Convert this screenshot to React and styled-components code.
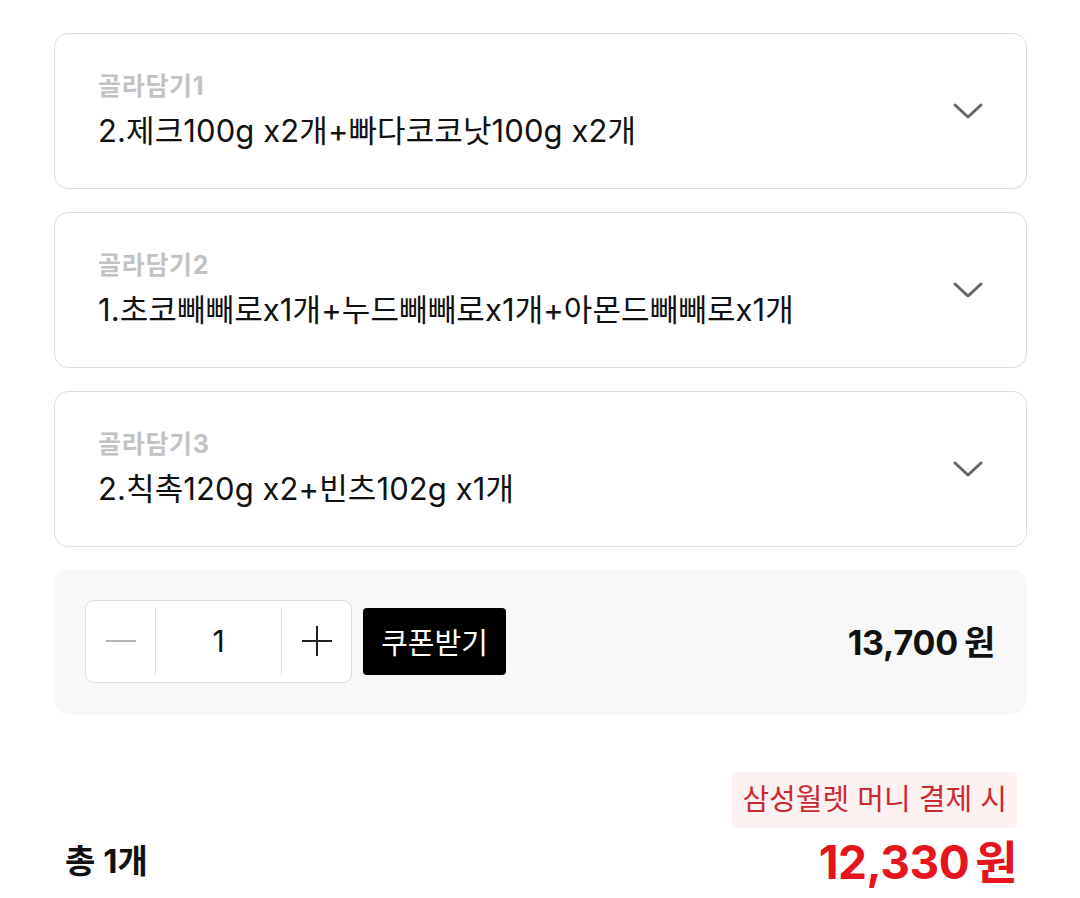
import React from "react";
import styled, { createGlobalStyle } from "styled-components";

const Global = createGlobalStyle`
  html, body { margin: 0; padding: 0; background: #fff; }
  body { font-family: Inter, "Noto Sans CJK KR", sans-serif; color: #111; }
`;

const Page = styled.div`
  width: 1080px;
  padding: 33px 53px 0 54px;
  box-sizing: border-box;
  display: flex;
  flex-direction: column;
`;

const OptionList = styled.div`
  display: flex;
  flex-direction: column;
  gap: 23px;
`;

const OptionCard = styled.div`
  height: 156px;
  box-sizing: border-box;
  border: 1.5px solid #dcdcdc;
  border-radius: 14px;
  background: #fff;
  display: flex;
  align-items: center;
  justify-content: space-between;
  padding: 0 42px 0 43px;
`;

const OptionText = styled.div`
  display: flex;
  flex-direction: column;
  gap: 8px;
`;

const OptionLabel = styled.div`
  font-size: 25px;
  font-weight: 700;
  color: #c2c2c2;
  line-height: 32px;
  letter-spacing: 0.7px;
`;

const OptionValue = styled.div`
  font-size: 31px;
  font-weight: 400;
  color: #111;
  line-height: 42px;
  letter-spacing: 0.1px;
`;

const Chevron = () => (
  <svg width="32" height="20" viewBox="0 0 32 20" fill="none">
    <path d="M3 4 L16 16 L29 4" stroke="#666" strokeWidth="3" strokeLinecap="round" strokeLinejoin="round" />
  </svg>
);

const QtyPanel = styled.div`
  margin-top: 22px;
  height: 146px;
  box-sizing: border-box;
  background: #f8f8f8;
  border-radius: 16px;
  display: flex;
  align-items: center;
  padding: 0 32px 0 31px;
`;

const Stepper = styled.div`
  width: 267px;
  height: 83px;
  box-sizing: border-box;
  border: 1.5px solid #dcdcdc;
  border-radius: 9px;
  background: #fff;
  display: grid;
  grid-template-columns: 70px 1fr 70px;
  align-items: center;
  margin-top: -2px;
`;

const StepBtn = styled.div`
  display: flex;
  align-items: center;
  justify-content: center;
  height: 67px;
  ${(p) => (p.$side === "left" ? "border-right: 1.5px solid #dcdcdc;" : "border-left: 1.5px solid #dcdcdc;")}
`;

const QtyValue = styled.div`
  text-align: center;
  font-size: 30px;
  color: #111;
`;

const CouponButton = styled.button`
  margin-left: 11px;
  margin-top: -2px;
  width: 143px;
  height: 67px;
  border: 0;
  border-radius: 4px;
  background: #000;
  color: #fff;
  font-family: inherit;
  font-size: 29px;
  font-weight: 400;
  padding: 0;
`;

const Price = styled.div`
  margin-left: auto;
  margin-top: -4px;
  font-size: 34px;
  font-weight: 700;
  color: #111;
  letter-spacing: -0.2px;
`;

const TotalRow = styled.div`
  margin-top: 57px;
  display: flex;
  align-items: flex-end;
  justify-content: space-between;
  padding: 0 10px 0 11px;
`;

const TotalCount = styled.div`
  font-size: 33px;
  font-weight: 700;
  color: #111;
  margin-bottom: 10px;
`;

const TotalRight = styled.div`
  display: flex;
  flex-direction: column;
  align-items: flex-end;
`;

const Badge = styled.div`
  background: #fdf1f1;
  color: #c92a2f;
  font-size: 29px;
  height: 56px;
  line-height: 56px;
  padding: 0 10px;
  border-radius: 4px;
`;

const TotalPrice = styled.div`
  font-size: 46px;
  font-weight: 700;
  color: #e6141c;
  line-height: 62px;
  margin-top: 3px;
  letter-spacing: -0.5px;
`;

const Won = styled.span`
  margin-left: 6px;
`;

const options = [
  { label: "골라담기1", value: "2.제크100g x2개+빠다코코낫100g x2개" },
  { label: "골라담기2", value: "1.초코빼빼로x1개+누드빼빼로x1개+아몬드빼빼로x1개" },
  { label: "골라담기3", value: "2.칙촉120g x2+빈츠102g x1개" },
];

export default function App() {
  return (
    <>
      <Global />
      <Page>
        <OptionList>
          {options.map((o) => (
            <OptionCard key={o.label}>
              <OptionText>
                <OptionLabel>{o.label}</OptionLabel>
                <OptionValue>{o.value}</OptionValue>
              </OptionText>
              <Chevron />
            </OptionCard>
          ))}
        </OptionList>
        <QtyPanel>
          <Stepper>
            <StepBtn $side="left">
              <svg width="32" height="4" viewBox="0 0 32 4">
                <line x1="1" y1="2" x2="31" y2="2" stroke="#b5b5b5" strokeWidth="2" />
              </svg>
            </StepBtn>
            <QtyValue>1</QtyValue>
            <StepBtn $side="right">
              <svg width="32" height="32" viewBox="0 0 32 32">
                <line x1="1" y1="16" x2="31" y2="16" stroke="#222" strokeWidth="2" />
                <line x1="16" y1="1" x2="16" y2="31" stroke="#222" strokeWidth="2" />
              </svg>
            </StepBtn>
          </Stepper>
          <CouponButton>쿠폰받기</CouponButton>
          <Price>
            13,700<Won>원</Won>
          </Price>
        </QtyPanel>
        <TotalRow>
          <TotalCount>총 1개</TotalCount>
          <TotalRight>
            <Badge>삼성월렛 머니 결제 시</Badge>
            <TotalPrice>
              12,330<Won>원</Won>
            </TotalPrice>
          </TotalRight>
        </TotalRow>
      </Page>
    </>
  );
}
